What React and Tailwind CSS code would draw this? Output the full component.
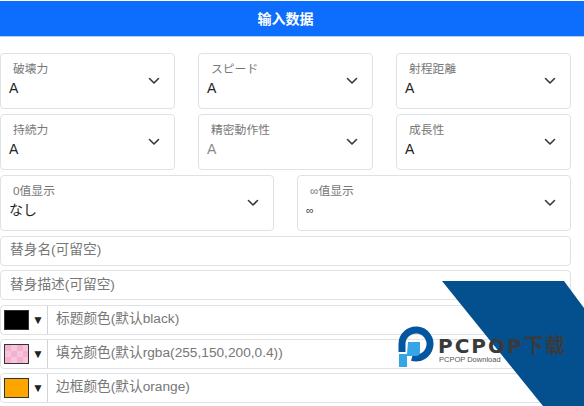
const SelectBox = ({ label, value, className, valueClass = "text-sm text-[#222]" }) => (
  <div
    className={`relative h-14 rounded border border-[#dee2e6] bg-white ${className}`}
  >
    <div className="pl-3 pt-[7px] text-[11.8px] leading-4 text-[#777]">
      {label}
    </div>
    <div className={`mt-px pl-2 leading-[20px] ${valueClass}`}>{value}</div>
    <svg
      className="absolute right-[13px] top-[22px]"
      width="14"
      height="10"
      viewBox="0 0 14 10"
      fill="none"
      stroke="#343a40"
      strokeWidth="1.6"
      strokeLinecap="round"
      strokeLinejoin="round"
    >
      <path d="M2.5 2.5L7 7l4.5-4.5" />
    </svg>
  </div>
);

const TextRow = ({ text }) => (
  <div className="flex h-[30px] items-center rounded border border-[#dee2e6] bg-white pb-px pl-[9px] text-[13.7px] text-[#777]">
    {text}
  </div>
);

const ColorRow = ({ swatch, text }) => (
  <div className="flex h-[30px] items-center rounded border border-[#dee2e6] bg-white">
    <div className="flex h-full w-[47px] shrink-0 items-center border-r border-[#ced4da] pl-[3px]">
      <span className={`h-[20px] w-[25px] border border-[#333] ${swatch}`} />
      <span className="ml-[3px] text-[12px] leading-none text-[#222]">▼</span>
    </div>
    <span className="pb-px pl-2 text-[13.7px] text-[#777]">{text}</span>
  </div>
);

const Watermark = () => (
  <div className="pointer-events-none absolute inset-0 overflow-hidden">
    <svg className="absolute inset-0" width="584" height="406" viewBox="0 0 584 406">
      <polygon points="442,281 564,281 584,308 584,406 543,406" fill="#04508f" />
      <path
        d="M402 352 V344 A14 14 0 1 1 412 357.4"
        fill="none"
        stroke="#04579f"
        strokeWidth="7"
      />
      <path
        d="M408 342 H420 V352 Q420 356 416 356 H407 V367 H399 V354 H407 Z"
        fill="#35a5e8"
      />
    </svg>
    <div className="absolute left-[438px] top-[338px] whitespace-nowrap font-['DejaVu_Sans','Noto_Sans_CJK_SC',sans-serif] text-[20px] font-bold leading-4 tracking-[2px] text-[#3a3a3a]">
      PCPOP<span className="tracking-[1px]">下载</span>
    </div>
    <div className="absolute left-[439px] top-[356px] whitespace-nowrap font-['Liberation_Sans',sans-serif] text-[7.5px] leading-[8px] text-[#555]">
      PCPOP Download
    </div>
  </div>
);

export default function App() {
  return (
    <div className="relative h-[406px] w-[584px] overflow-hidden bg-white font-['Liberation_Sans','Noto_Sans_CJK_SC',sans-serif]">
      <div className="mt-px flex h-9 items-center justify-center border-b border-[#a8d4f5] bg-[#0d6efd] pr-[13px] text-sm font-bold text-white">
        输入数据
      </div>

      <div className="flex w-[571px] flex-col pt-4">
        <div className="flex justify-between">
          <SelectBox className="w-[175px]" label="破壊力" value="A" />
          <SelectBox className="w-[175px]" label="スピード" value="A" />
          <SelectBox className="w-[175px]" label="射程距離" value="A" />
        </div>
        <div className="mt-[5px] flex justify-between">
          <SelectBox className="w-[175px]" label="持続力" value="A" />
          <SelectBox
            className="w-[175px]"
            label="精密動作性"
            value="A"
            valueClass="text-sm text-[#8a8a8a]"
          />
          <SelectBox className="w-[175px]" label="成長性" value="A" />
        </div>
        <div className="mt-[5px] flex justify-between">
          <SelectBox className="w-[274px]" label="0值显示" value="なし" />
          <SelectBox
            className="w-[274px]"
            label="∞值显示"
            value="∞"
            valueClass="text-[11px] text-[#444]"
          />
        </div>

        <div className="mt-[5px] flex flex-col gap-[4.3px]">
          <TextRow text="替身名(可留空)" />
          <TextRow text="替身描述(可留空)" />
          <ColorRow swatch="bg-black" text="标题颜色(默认black)" />
          <ColorRow
            swatch="bg-[conic-gradient(#f8c4dc_25%,#f2b2cf_0_50%,#f8c4dc_0_75%,#f2b2cf_0)] bg-[length:12px_12px]"
            text="填充颜色(默认rgba(255,150,200,0.4))"
          />
          <ColorRow swatch="bg-[#ffa500]" text="边框颜色(默认orange)" />
        </div>
      </div>

      <Watermark />
    </div>
  );
}
